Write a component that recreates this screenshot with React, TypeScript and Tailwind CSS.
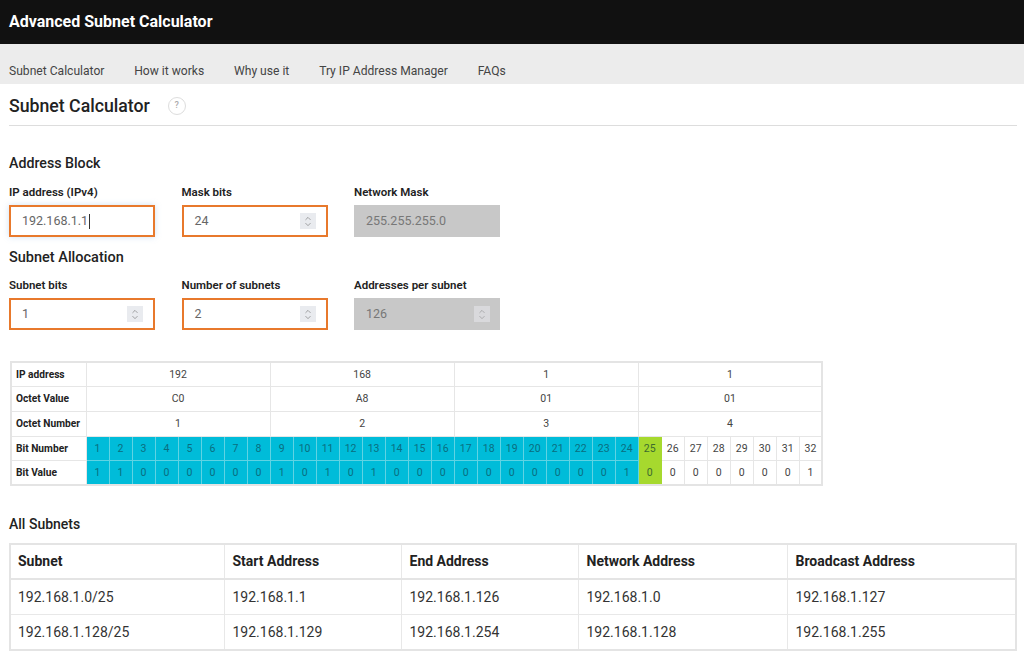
import { ChevronUp, ChevronDown } from "lucide-react";

const navItems = ["Subnet Calculator", "How it works", "Why use it", "Try IP Address Manager", "FAQs"];

const octets = [
  { ip: "192", hex: "C0", num: "1" },
  { ip: "168", hex: "A8", num: "2" },
  { ip: "1", hex: "01", num: "3" },
  { ip: "1", hex: "01", num: "4" },
];

const bitValues = "11000000101010000000000100000001".split("");
const bits = Array.from({ length: 32 }, (_, i) => i);

const subnets = [
  ["192.168.1.0/25", "192.168.1.1", "192.168.1.126", "192.168.1.0", "192.168.1.127"],
  ["192.168.1.128/25", "192.168.1.129", "192.168.1.254", "192.168.1.128", "192.168.1.255"],
];

function Spinner({ disabled }: { disabled?: boolean }) {
  return (
    <div className={`flex h-4 w-4 flex-col items-center justify-center ${disabled ? "bg-[#d9d9dc] text-[#8a8a8a]" : "bg-[#e9ebef] text-[#666]"}`}>
      <ChevronUp className="-mb-[1.5px] h-[9px] w-3" strokeWidth={1.5} />
      <ChevronDown className="-mt-[1.5px] h-[9px] w-3" strokeWidth={1.5} />
    </div>
  );
}

function Field({ label, value, spinner, disabled, caret }: { label: string; value: string; spinner?: boolean; disabled?: boolean; caret?: boolean }) {
  return (
    <div className="w-[146px]">
      <div className="mb-[6px] h-[14px] text-[11.5px] leading-[14px] font-semibold text-[#222]">{label}</div>
      <div
        className={`flex h-[32px] items-center justify-between pr-[10px] pl-[11px] text-[12.5px] ${
          disabled ? "bg-[#c8c8c8] pl-[12px] text-[#777]" : "border-2 border-[#e8792c] text-[#666]"
        } ${caret ? "shadow-[0_0_6px_rgba(120,170,220,0.35)]" : ""}`}
      >
        <span className="flex items-center">
          {value}
          {caret && <span className="ml-px h-[15px] w-px bg-[#333]" />}
        </span>
        {spinner && <Spinner disabled={disabled} />}
      </div>
    </div>
  );
}

export default function App() {
  const headCell = "border border-[#e6e6e6] pl-[4px] text-left text-[10.2px] font-bold text-[#222]";
  const octetCell = "border border-[#e6e6e6] text-center text-[10.5px] font-normal text-[#444]";
  const bitCell = (i: number) =>
    i < 24
      ? "border border-[#5fd3e3] bg-[#00bcd9] text-center text-[10.5px] text-[#0a6e80]"
      : i === 24
        ? "border border-[#a6d92e] bg-[#a6d92e] text-center text-[10.5px] text-[#3d6b2e]"
        : "border border-[#e6e6e6] text-center text-[10.5px] text-[#444]";

  return (
    <div className="h-[658px] w-[1024px] overflow-hidden bg-white font-['Roboto',sans-serif]">
      {/* Header */}
      <div className="flex h-11 items-center bg-[#111111] pl-[9px] text-[16px] font-bold text-white">Advanced Subnet Calculator</div>

      {/* Nav */}
      <div className="flex h-10 gap-[29.8px] bg-[#ececec] pt-[19px] pl-[9px] text-[12.1px] leading-[16px] text-[#444]">
        {navItems.map((item) => (
          <span key={item}>{item}</span>
        ))}
      </div>

      <div className="pr-[7px] pl-[9px]">
        {/* Title */}
        <div className="flex h-[42px] items-center border-b border-[#dddddd] pt-[3px]">
          <h1 className="text-[17.7px] font-medium text-[#222]">Subnet Calculator</h1>
          <span className="ml-[18px] flex h-[18px] w-[18px] items-center justify-center rounded-full border border-[#ddd] text-[9px] font-medium text-[#aaa]">?</span>
        </div>

        {/* Address block */}
        <h2 className="mt-[28px] h-[18px] text-[14.2px] leading-[19px] font-medium text-[#222]">Address Block</h2>
        <div className="mt-[13px] flex gap-[26.5px]">
          <Field label="IP address (IPv4)" value="192.168.1.1" caret />
          <Field label="Mask bits" value="24" spinner />
          <Field label="Network Mask" value="255.255.255.0" disabled />
        </div>

        {/* Subnet allocation */}
        <h2 className="mt-[12px] h-[18px] text-[14.5px] leading-[18px] font-medium text-[#222]">Subnet Allocation</h2>
        <div className="mt-[11px] flex gap-[26.5px]">
          <Field label="Subnet bits" value="1" spinner />
          <Field label="Number of subnets" value="2" spinner />
          <Field label="Addresses per subnet" value="126" spinner disabled />
        </div>

        {/* Bit table */}
        <table className="mt-[31px] ml-px w-[813px] table-fixed border-collapse border-2 border-[#e4e4e4]">
          <colgroup>
            <col className="w-[75px]" />
            {bits.map((i) => (
              <col key={i} className="w-[23px]" />
            ))}
          </colgroup>
          <tbody>
            <tr className="h-[24.7px]">
              <th className={headCell}>IP address</th>
              {octets.map((o, i) => (
                <td key={i} colSpan={8} className={octetCell}>{o.ip}</td>
              ))}
            </tr>
            <tr className="h-[24.7px]">
              <th className={headCell}>Octet Value</th>
              {octets.map((o, i) => (
                <td key={i} colSpan={8} className={octetCell}>{o.hex}</td>
              ))}
            </tr>
            <tr className="h-[24.7px]">
              <th className={headCell}>Octet Number</th>
              {octets.map((o, i) => (
                <td key={i} colSpan={8} className={octetCell}>{o.num}</td>
              ))}
            </tr>
            <tr className="h-[24.7px]">
              <th className={headCell}>Bit Number</th>
              {bits.map((i) => (
                <td key={i} className={bitCell(i)}>{i + 1}</td>
              ))}
            </tr>
            <tr className="h-[24.7px]">
              <th className={headCell}>Bit Value</th>
              {bits.map((i) => (
                <td key={i} className={bitCell(i)}>{bitValues[i]}</td>
              ))}
            </tr>
          </tbody>
        </table>

        {/* All subnets */}
        <h2 className="mt-[29px] h-[18px] text-[14px] leading-[18px] font-medium text-[#222]">All Subnets</h2>
        <table className="mt-[10px] w-[1008px] table-fixed border-collapse border-2 border-[#e4e4e4] text-[14px] text-[#333]">
          <colgroup>
            <col className="w-[214px]" />
            <col className="w-[177px]" />
            <col className="w-[177px]" />
            <col className="w-[209px]" />
            <col />
          </colgroup>
          <thead>
            <tr className="h-[35px] border-b-2 border-[#e4e4e4] text-left text-[#222]">
              {["Subnet", "Start Address", "End Address", "Network Address", "Broadcast Address"].map((h, i) => (
                <th key={h} className={`border-x border-[#e8e8e8] font-bold ${i === 0 ? "pl-[7px]" : "pl-[8px]"}`}>{h}</th>
              ))}
            </tr>
          </thead>
          <tbody>
            {subnets.map((row) => (
              <tr key={row[0]} className="h-[35.5px] border-b border-[#e8e8e8]">
                {row.map((c, i) => (
                  <td key={i} className={`border-x border-[#e8e8e8] pt-px ${i === 0 ? "pl-[7px]" : "pl-[8px]"}`}>{c}</td>
                ))}
              </tr>
            ))}
          </tbody>
        </table>
      </div>
    </div>
  );
}
